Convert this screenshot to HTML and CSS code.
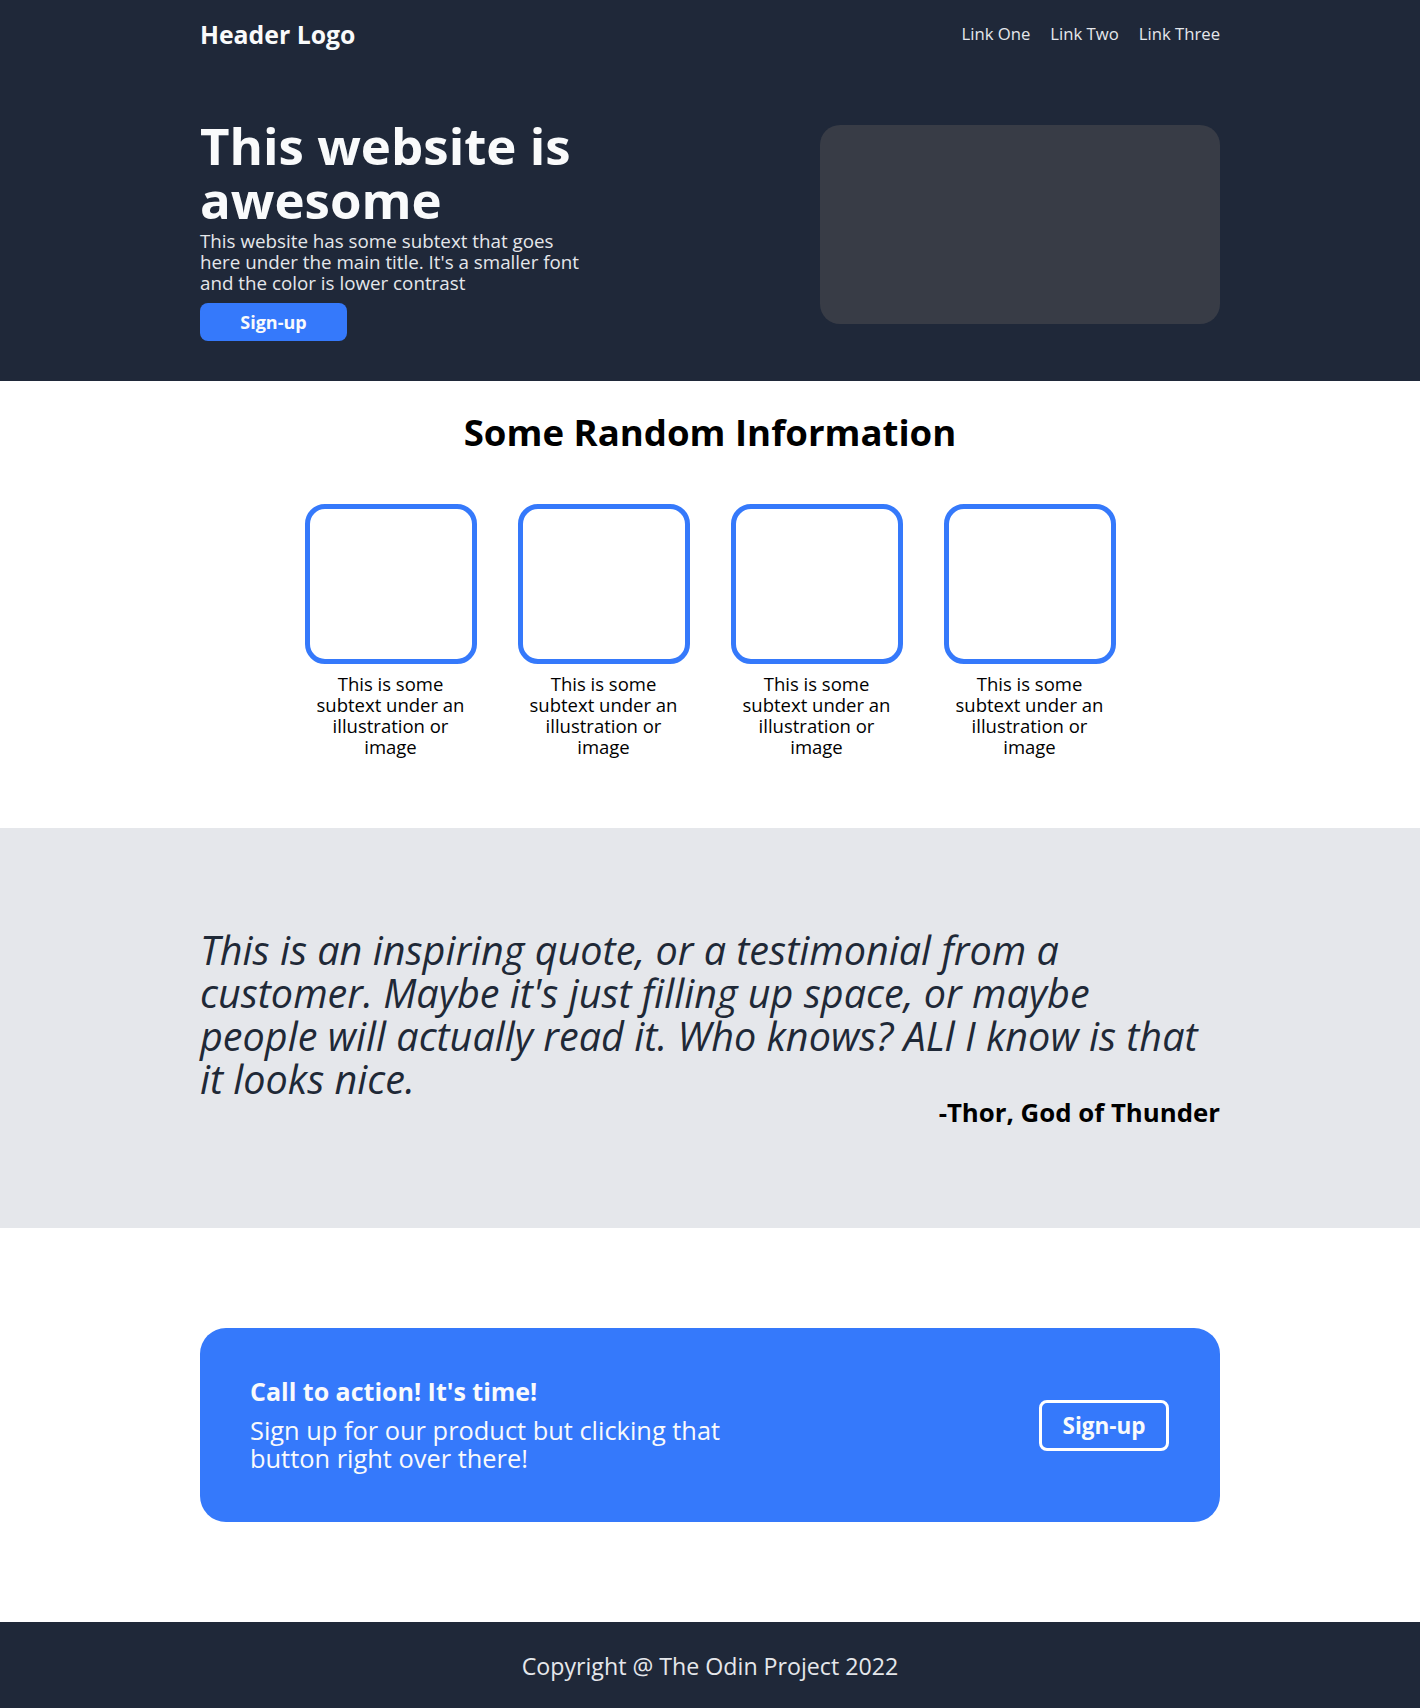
FILE: index.html
```html
<!DOCTYPE html>
<html lang="en">
<head>
<meta charset="utf-8">
<title>Landing Page</title>
<link rel="stylesheet" href="styles.css">
</head>
<body>
<section class="hero">
  <div class="container">
    <header class="topbar">
      <div class="logo">Header Logo</div>
      <nav class="nav">
        <a href="#" class="nav-link">Link One</a>
        <a href="#" class="nav-link">Link Two</a>
        <a href="#" class="nav-link">Link Three</a>
      </nav>
    </header>
    <div class="hero-row">
      <div class="hero-text">
        <h1 class="hero-title">This website is awesome</h1>
        <p class="hero-sub">This website has some subtext that goes here under the main title. It's a smaller font and the color is lower contrast</p>
        <button class="hero-btn">Sign-up</button>
      </div>
      <div class="hero-image"></div>
    </div>
  </div>
</section>

<section class="info">
  <h2 class="info-title">Some Random Information</h2>
  <div class="cards">
    <div class="card">
      <div class="card-box"></div>
      <p class="card-text">This is some subtext under an illustration or image</p>
    </div>
    <div class="card">
      <div class="card-box"></div>
      <p class="card-text">This is some subtext under an illustration or image</p>
    </div>
    <div class="card">
      <div class="card-box"></div>
      <p class="card-text">This is some subtext under an illustration or image</p>
    </div>
    <div class="card">
      <div class="card-box"></div>
      <p class="card-text">This is some subtext under an illustration or image</p>
    </div>
  </div>
</section>

<section class="quote-section">
  <div class="container">
    <p class="quote">This is an inspiring quote, or a testimonial from a customer. Maybe it's just filling up space, or maybe people will actually read it. Who knows? ALl I know is that it looks nice.</p>
    <p class="author">-Thor, God of Thunder</p>
  </div>
</section>

<section class="cta-section">
  <div class="container">
    <div class="cta">
      <div class="cta-text">
        <h3 class="cta-title">Call to action! It's time!</h3>
        <p class="cta-sub">Sign up for our product but clicking that button right over there!</p>
      </div>
      <button class="cta-btn">Sign-up</button>
    </div>
  </div>
</section>

<footer class="footer">Copyright @ The Odin Project 2022</footer>
</body>
</html>
```
FILE: styles.css
```css
* { box-sizing: border-box; }

body {
  margin: 0;
  font-family: "Open Sans", "Noto Sans", sans-serif;
  color: #000;
  background: #fff;
}

h1, h2, h3, p { margin: 0; }

.container {
  width: 1020px;
  margin: 0 auto;
}

/* HERO */
.hero {
  background: #1f2839;
  padding: 18px 0 40px;
}

.topbar {
  display: flex;
  justify-content: space-between;
  align-items: center;
  height: 32px;
}

.logo {
  font-size: 24.8px;
  font-weight: 700;
  line-height: 32px;
  color: #f9fafb;
}

.nav {
  display: flex;
  gap: 20px;
}

.nav-link {
  font-size: 16.7px;
  line-height: 32px;
  color: #e5e7eb;
  text-decoration: none;
}

.hero-row {
  display: flex;
  justify-content: space-between;
  align-items: flex-start;
  margin-top: 68px;
}

.hero-text {
  width: 390px;
}

.hero-title {
  font-size: 51px;
  font-weight: 700;
  line-height: 54px;
  color: #f9fafb;
}

.hero-sub {
  margin-top: 5px;
  font-size: 18.8px;
  line-height: 20.8px;
  color: #e5e7eb;
}

.hero-btn {
  display: block;
  margin-top: 10px;
  width: 147px;
  height: 38px;
  border: none;
  border-radius: 8px;
  background: #3579fb;
  color: #f9fafb;
  font-family: inherit;
  font-size: 18px;
  font-weight: 700;
  padding: 0;
}

.hero-image {
  width: 400px;
  height: 199px;
  margin-top: 7px;
  border-radius: 20px;
  background: #383c46;
}

/* INFO */
.info {
  padding: 29px 0 71px;
}

.info-title {
  text-align: center;
  font-size: 36.6px;
  font-weight: 700;
  line-height: 44px;
}

.cards {
  display: flex;
  justify-content: center;
  gap: 41px;
  margin-top: 50px;
}

.card {
  width: 172px;
  display: flex;
  flex-direction: column;
  align-items: center;
}

.card-box {
  width: 172px;
  height: 160px;
  border: 5px solid #3579fb;
  border-radius: 20px;
}

.card-text {
  width: 160px;
  margin-top: 9px;
  text-align: center;
  font-size: 18.5px;
  line-height: 21px;
}

/* QUOTE */
.quote-section {
  background: #e5e7eb;
  padding: 101px 0 105px;
}

.quote {
  max-width: 1010px;
  font-size: 39.6px;
  font-style: italic;
  line-height: 43px;
  color: #1f2937;
}

.author {
  text-align: right;
  font-size: 25.8px;
  font-weight: 700;
  line-height: 22px;
  color: #000;
}

/* CTA */
.cta-section {
  padding: 100px 0;
}

.cta {
  height: 194px;
  display: flex;
  justify-content: space-between;
  align-items: center;
  padding: 0 51px 0 50px;
  border-radius: 26px;
  background: #3579fb;
  color: #f9fafb;
}

.cta-text {
  width: 500px;
  margin-bottom: 2px;
}

.cta-title {
  font-size: 25px;
  font-weight: 700;
  line-height: 30px;
}

.cta-sub {
  margin-top: 10px;
  font-size: 25.4px;
  line-height: 28px;
}

.cta-btn {
  width: 130px;
  height: 51px;
  border: 3px solid #fff;
  border-radius: 8px;
  background: transparent;
  color: #f9fafb;
  font-family: inherit;
  font-size: 22.5px;
  font-weight: 700;
  padding: 0;
}

/* FOOTER */
.footer {
  height: 87px;
  display: flex;
  justify-content: center;
  align-items: center;
  background: #1f2839;
  color: #e5e7eb;
  font-size: 23.2px;
}
```
